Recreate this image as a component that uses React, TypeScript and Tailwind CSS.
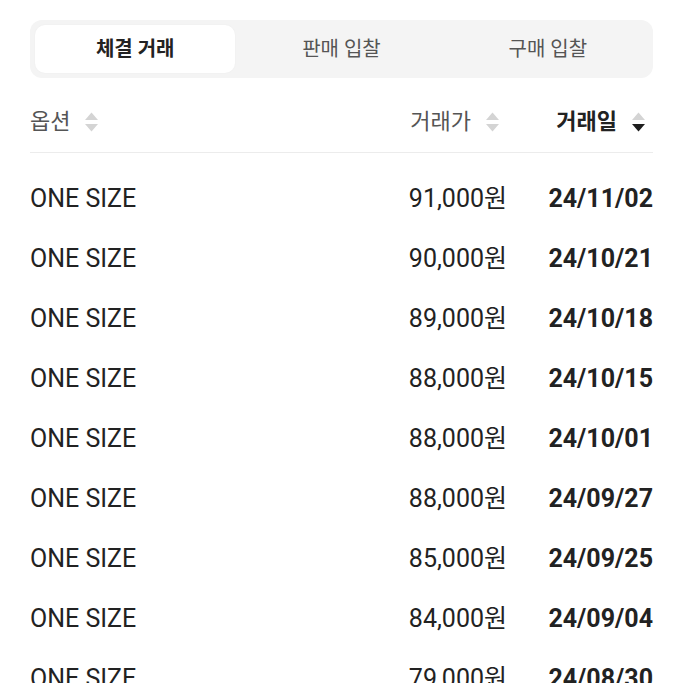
import React from "react";

type Trade = { option: string; price: string; date: string };

const trades: Trade[] = [
  { option: "ONE SIZE", price: "91,000원", date: "24/11/02" },
  { option: "ONE SIZE", price: "90,000원", date: "24/10/21" },
  { option: "ONE SIZE", price: "89,000원", date: "24/10/18" },
  { option: "ONE SIZE", price: "88,000원", date: "24/10/15" },
  { option: "ONE SIZE", price: "88,000원", date: "24/10/01" },
  { option: "ONE SIZE", price: "88,000원", date: "24/09/27" },
  { option: "ONE SIZE", price: "85,000원", date: "24/09/25" },
  { option: "ONE SIZE", price: "84,000원", date: "24/09/04" },
  { option: "ONE SIZE", price: "79,000원", date: "24/08/30" },
];

const tabs = ["체결 거래", "판매 입찰", "구매 입찰"];

function SortIcon({ active }: { active?: boolean }) {
  return (
    <svg width="15" height="22" viewBox="0 0 15 22" className="shrink-0">
      <path d="M7.5 1.5 L14 9 L1 9 Z" fill="#d4d4d4" />
      <path d="M7.5 20.5 L14 13 L1 13 Z" fill={active ? "#1e1e1e" : "#d4d4d4"} />
    </svg>
  );
}

export default function App() {
  return (
    <div
      className="w-[683px] h-[683px] overflow-hidden bg-white px-[30px] text-[#222]"
      style={{ fontFamily: 'Roboto, "Noto Sans CJK KR", sans-serif' }}
    >
      {/* Tabs */}
      <div className="mt-[20px] h-[58px] flex gap-[6px] rounded-[12px] bg-[#f4f4f4] p-[5px]">
        {tabs.map((t, i) => (
          <div
            key={t}
            className={
              i === 0
                ? "flex-1 flex items-center justify-center rounded-[10px] bg-white text-[20px] font-bold text-[#222] shadow-[0_0_2px_rgba(0,0,0,0.04)]"
                : "flex-1 flex items-center justify-center text-[20px] text-[#555]"
            }
          >
            {t}
          </div>
        ))}
      </div>

      {/* Header */}
      <div className="h-[75px] flex items-end pb-[16px] pr-[7px] border-b border-[#ececec] text-[22px] leading-[28px]">
        <div className="flex-1 flex items-center gap-[14px] text-[#555]">
          <span>옵션</span>
          <SortIcon />
        </div>
        <div className="flex items-center gap-[14px] text-[#555]">
          <span>거래가</span>
          <SortIcon />
        </div>
        <div className="w-[146px] flex items-center justify-end gap-[14px] font-bold text-[#222]">
          <span>거래일</span>
          <SortIcon active />
        </div>
      </div>

      {/* Rows */}
      <div className="pt-[16px]">
        {trades.map((t, i) => (
          <div key={i} className="h-[60px] flex items-center text-[25px] leading-[30px]">
            <div className="flex-1 text-[#222]">{t.option}</div>
            <div className="text-right text-[#222]">{t.price}</div>
            <div className="w-[146px] text-right font-bold text-[#222]">{t.date}</div>
          </div>
        ))}
      </div>
    </div>
  );
}
